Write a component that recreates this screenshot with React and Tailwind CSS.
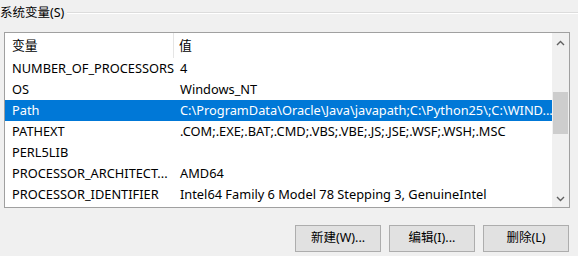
import React from "react";

const rows = [
  ["NUMBER_OF_PROCESSORS", "4"],
  ["OS", "Windows_NT"],
  ["Path", "C:\\ProgramData\\Oracle\\Java\\javapath;C:\\Python25\\;C:\\WIND...", true],
  ["PATHEXT", ".COM;.EXE;.BAT;.CMD;.VBS;.VBE;.JS;.JSE;.WSF;.WSH;.MSC"],
  ["PERL5LIB", ""],
  ["PROCESSOR_ARCHITECT...", "AMD64"],
  ["PROCESSOR_IDENTIFIER", "Intel64 Family 6 Model 78 Stepping 3, GenuineIntel"],
];

const font = { fontFamily: '"Noto Sans", "Noto Sans CJK SC", sans-serif' };

function Chevron({ down }) {
  return (
    <svg width="9" height="6" viewBox="0 0 9 6">
      <path
        d={down ? "M1 1 L4.5 4.5 L8 1" : "M1 5 L4.5 1.5 L8 5"}
        fill="none"
        stroke="#606060"
        strokeWidth="1.4"
      />
    </svg>
  );
}

export default function App() {
  return (
    <div
      className="w-[578px] h-[256px] bg-[#f0f0f0] overflow-hidden flex flex-col text-[12.8px] text-black"
      style={font}
    >
      <div className="flex items-center h-[24px] pt-[2px]">
        <span className="text-[12.5px] leading-[16px] whitespace-nowrap">系统变量(S)</span>
        <div className="flex-1 ml-[3px] border-t border-[#dcdcdc] border-b border-b-white h-[2px]" />
      </div>
      <div className="ml-[4px] mt-[8px] w-[566px] h-[176px] border border-[#a0a0a0] bg-white flex">
        <div className="flex-1 flex flex-col overflow-hidden">
          <div className="flex h-[25px] items-center">
            <div className="w-[169px] pl-[7px] h-full flex items-center border-r border-[#e5e5e5]">变量</div>
            <div className="pl-[5px]">值</div>
          </div>
          {rows.map(([k, v, sel]) => (
            <div
              key={k}
              className={
                "flex h-[21px] items-center whitespace-nowrap " +
                (sel ? "bg-[#0078d7] text-white" : "")
              }
            >
              <div className="w-[169px] shrink-0 pl-[7px]">{k}</div>
              <div className="pl-[6px]">{v}</div>
            </div>
          ))}
        </div>
        <div className="w-[17px] bg-[#f0f0f0] flex flex-col items-center">
          <div className="h-[17px] w-full flex items-center justify-center pt-[2px]">
            <Chevron />
          </div>
          <div className="h-[42px] mt-[42px] w-[15px] bg-[#cdcdcd]" />
          <div className="flex-1" />
          <div className="h-[17px] w-full flex items-center justify-center">
            <Chevron down />
          </div>
        </div>
      </div>
      <div className="flex justify-end gap-[8px] pr-[9px] mt-[17px]">
        {["新建(W)...", "编辑(I)...", "删除(L)"].map((t) => (
          <button
            key={t}
            className="w-[86px] h-[27px] bg-[#e1e1e1] border border-[#adadad] text-[12.5px] flex items-center justify-center"
          >
            {t}
          </button>
        ))}
      </div>
    </div>
  );
}
